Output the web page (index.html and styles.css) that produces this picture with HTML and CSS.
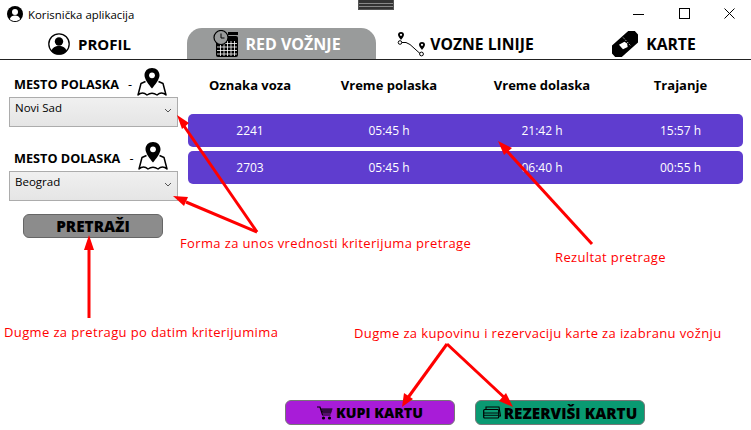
FILE: index.html
```html
<!DOCTYPE html>
<html>
<head>
    <meta charset="UTF-8">
    <title>Korisnička aplikacija</title>
    <link rel="stylesheet" href="styles.css">
</head>
<body>
<div class="window">

    <div class="notch"></div>

    <div class="titlebar">
        <div class="app-title">
            <svg class="app-icon" viewBox="0 0 16 16"><circle cx="8" cy="8" r="8" fill="#000"/><circle cx="8" cy="6" r="3" fill="#fff"/><path d="M2.8 13c.8-2.600 2.800-3.600 5.200-3.600s4.400 1 5.200 3.600c-1.400 1.400-3.200 2-5.200 2s-3.800-.6-5.200-2z" fill="#fff"/></svg>
            <span>Korisnička aplikacija</span>
        </div>
        <div class="window-buttons">
            <svg class="win-btn" viewBox="0 0 11 11"><path d="M0 6.500h11" stroke="#000" fill="none"/></svg>
            <svg class="win-btn" viewBox="0 0 11 11"><rect x=".5" y=".5" width="10" height="10" stroke="#000" fill="none"/></svg>
            <svg class="win-btn" viewBox="0 0 11 11"><path d="M.5.5l10 10M10.500.5l-10 10" stroke="#000" fill="none"/></svg>
        </div>
    </div>

    <div class="tabs">
        <div class="tab tab-profil">
            <svg class="tab-icon" viewBox="0 0 22 22"><circle cx="11" cy="11" r="10.200" fill="#fff" stroke="#000" stroke-width="1.300"/><circle cx="11" cy="8.500" r="4.200"/><path d="M3.500 18c.8-3.500 3.500-5 7.500-5s6.700 1.500 7.500 5c-2 2.300-4.600 3.400-7.500 3.400S5.500 20.300 3.500 18z"/></svg>
            <span>PROFIL</span>
        </div>
        <div class="tab tab-active">
            <svg class="tab-icon-big" viewBox="0 0 26 28"><rect x="3" y="6" width="22" height="21" rx="2"/><rect x="15" y="2" width="10" height="3"/><g stroke="#fff" stroke-width=".8"><path d="M4 13.500h20M4 17h20M4 20.500h20M4 24h20M7.500 11v15M11 11v15M14.500 11v15M18 11v15M21.500 11v15"/></g><circle cx="8" cy="7.500" r="7" fill="#999b9b" stroke="#000" stroke-width="1.200"/><path d="M8 3.500v4.500h3.500" stroke="#000" stroke-width="1" fill="none"/></svg>
            <span>RED VOŽNJE</span>
        </div>
        <div class="tab tab-linije">
            <svg class="route-icon" viewBox="0 0 32 26"><path d="M3 11.500h6l4 2 10 9" fill="none" stroke="#000"/><circle cx="3" cy="11.500" r="1.800" fill="#fff" stroke="#000"/><circle cx="24.500" cy="23" r="1.900" fill="#fff" stroke="#000"/><path d="M4 1c-2 0-3 1.300-3 2.800 0 1.700 2 4 3 5.200 1-1.200 3-3.500 3-5.200C7 2.300 6 1 4 1z"/><circle cx="4" cy="3.800" r="1.100" fill="#fff"/><path d="M25 11c-2 0-3 1.300-3 2.800 0 1.700 2 4 3 5.200 1-1.200 3-3.500 3-5.200 0-1.500-1-2.800-3-2.800z"/><circle cx="25" cy="13.800" r="1.100" fill="#fff"/></svg>
            <span>VOZNE LINIJE</span>
        </div>
        <div class="tab tab-karte">
            <svg class="ticket-icon" viewBox="0 0 26 26"><g transform="rotate(-42 13 13)"><rect x="-3" y="5.500" width="32" height="15" rx="3"/><path d="M8 9.500l6 1.500 1 3-2 3-5-1.500z" fill="#fff"/><path d="M16 7v12" stroke="#fff" stroke-width=".7" stroke-dasharray="1.500 1.500"/></g></svg>
            <span>KARTE</span>
        </div>
    </div>

    <div class="content">
        <div class="search-form">
            <div class="field">
                <div class="field-label">
                    <b>MESTO POLASKA</b><span class="dash">-</span>
                    <svg class="pin-icon" viewBox="0 0 30 30"><path d="M15 1c-4.500 0-7.500 3.200-7.500 7.200 0 4.200 4.700 9.800 7.500 13.300 2.800-3.500 7.500-9.100 7.500-13.300C22.500 4.200 19.500 1 15 1z"/><circle cx="15" cy="8.300" r="2.900" fill="#fff"/><path d="M8.500 14.500L4 16.500 1 28c3-2.600 6-2.600 9 0 3.300-2.200 6.700-2.200 10 0 3-2.600 6-2.600 9 0l-3-11.500-4.500-2" fill="none" stroke="#000" stroke-width="1.500" stroke-linejoin="round"/></svg>
                </div>
                <div class="combo">
                    <span>Novi Sad</span>
                    <svg class="chevron" viewBox="0 0 8 5"><path d="M1 1l3 3 3-3" fill="none" stroke="#555"/></svg>
                </div>
            </div>
            <div class="field field-second">
                <div class="field-label">
                    <b>MESTO DOLASKA</b><span class="dash">-</span>
                    <svg class="pin-icon" viewBox="0 0 30 30"><path d="M15 1c-4.500 0-7.500 3.200-7.500 7.200 0 4.200 4.700 9.800 7.500 13.300 2.800-3.500 7.500-9.100 7.500-13.300C22.500 4.200 19.500 1 15 1z"/><circle cx="15" cy="8.300" r="2.900" fill="#fff"/><path d="M8.500 14.500L4 16.500 1 28c3-2.600 6-2.600 9 0 3.300-2.200 6.700-2.200 10 0 3-2.600 6-2.600 9 0l-3-11.500-4.500-2" fill="none" stroke="#000" stroke-width="1.500" stroke-linejoin="round"/></svg>
                </div>
                <div class="combo">
                    <span>Beograd</span>
                    <svg class="chevron" viewBox="0 0 8 5"><path d="M1 1l3 3 3-3" fill="none" stroke="#555"/></svg>
                </div>
            </div>
            <div class="search-btn">PRETRAŽI</div>
        </div>

        <div class="results">
            <div class="row-head">
                <div>Oznaka voza</div>
                <div>Vreme polaska</div>
                <div>Vreme dolaska</div>
                <div>Trajanje</div>
            </div>
            <div class="row">
                <div>2241</div>
                <div>05:45 h</div>
                <div>21:42 h</div>
                <div>15:57 h</div>
            </div>
            <div class="row">
                <div>2703</div>
                <div>05:45 h</div>
                <div>06:40 h</div>
                <div>00:55 h</div>
            </div>
        </div>
    </div>

    <div class="actions">
        <div class="action-btn btn-kupi">
            <svg class="cart-icon" viewBox="0 0 16 14"><path d="M0 1h3l2.500 8h8" fill="none" stroke="#000" stroke-width="1.200"/><path d="M4 2.500h11.500l-1.500 5H5.500z"/><path d="M5 4h10M5.500 6h9" stroke="#a81cd8" stroke-width=".6"/><circle cx="6.500" cy="12" r="1.600"/><circle cx="12.500" cy="12" r="1.600"/></svg>
            <span>KUPI KARTU</span>
        </div>
        <div class="action-btn btn-rezervisi">
            <svg class="res-icon" viewBox="0 0 18 13"><path d="M3 3V1h13l1.500 9H16" fill="none" stroke="#000" stroke-width="1.100"/><rect x=".7" y="3.500" width="15" height="8.500" rx="1" fill="none" stroke="#000" stroke-width="1.200"/><path d="M1 7h14M1 9.300h14" stroke="#000" stroke-width=".9"/></svg>
            <span>REZERVIŠI KARTU</span>
        </div>
    </div>

    <!-- napomene preko slike -->
    <svg class="arrows" viewBox="0 0 751 430">
        <g stroke="#f00" stroke-width="3" fill="#f00">
            <path d="M257 232L184 126"/>
            <path d="M257 232L186 202"/>
            <path d="M89 318V248"/>
            <path d="M592 244L506 150"/>
            <path d="M447 344L407 399"/>
            <path d="M447 344L507 400"/>
        </g>
        <g fill="#f00">
            <path d="M177 115l12 8-7 6z"/>
            <path d="M173 196l15 1-4 9z"/>
            <path d="M89 235l5 15h-10z"/>
            <path d="M498 141l14 7-8 7z"/>
            <path d="M402 407l2-14 9 6z"/>
            <path d="M513 407l-14-6 7-8z"/>
        </g>
    </svg>
    <div class="note note-forma">Forma za unos vrednosti kriterijuma pretrage</div>
    <div class="note note-rezultat">Rezultat pretrage</div>
    <div class="note note-pretraga">Dugme za pretragu po datim kriterijumima</div>
    <div class="note note-kupovina">Dugme za kupovinu i rezervaciju karte za izabranu vožnju</div>

</div>
</body>
</html>
```

FILE: styles.css
```css
* {
    box-sizing: border-box;
}

body {
    margin: 0;
    background: #fff;
    font-family: "Open Sans", "Noto Sans", sans-serif;
    color: #000;
}

.window {
    position: relative;
    width: 751px;
    height: 430px;
    overflow: hidden;
}

.notch {
    position: absolute;
    left: 358px;
    top: 0;
    width: 36px;
    height: 10px;
    background: linear-gradient(#333 3px, #888 3px, #888 4px, #333 4px, #333 6px, #888 6px, #888 7px, #333 7px);
    border: 1px solid #555;
    border-top: 0;
}

.titlebar {
    height: 28px;
    display: flex;
    justify-content: space-between;
    padding: 5px 0 0 7px;
}

.app-title {
    display: flex;
    align-items: center;
    gap: 5px;
    height: 18px;
    font-size: 11.400px;
}

.app-icon {
    width: 16px;
    height: 16px;
}

.window-buttons {
    display: flex;
    gap: 34.500px;
    padding: 3px 16px 0 0;
}

.win-btn {
    width: 11px;
    height: 11px;
}

.tabs {
    height: 32px;
    display: grid;
    grid-template-columns: 187px 189px 179px 1fr;
    border-bottom: 1px solid #222;
}

.tab {
    display: flex;
    align-items: center;
    justify-content: center;
    font-size: 15.700px;
    font-weight: 700;
}

.tab-profil {
    gap: 8px;
    padding-right: 8px;
    font-size: 15px;
}

.tab-active {
    gap: 6px;
    background: #999b9b;
    color: #fff;
    border-radius: 15px 15px 0 0;
    font-size: 16px;
    padding-right: 9px;
}

.tab-linije {
    gap: 1px;
}

.tab-karte {
    gap: 8px;
    padding-left: 2px;
}

.tab-icon {
    width: 22px;
    height: 22px;
}

.tab-icon-big {
    width: 26px;
    height: 28px;
}

.route-icon {
    width: 32px;
    height: 26px;
}

.ticket-icon {
    width: 26px;
    height: 26px;
}

.content {
    display: flex;
}

.search-form {
    width: 188px;
    padding: 7px 0 0 9px;
}

.field-second {
    margin-top: 14px;
}

.field-label {
    height: 30px;
    display: flex;
    align-items: flex-end;
    padding: 0 0 4px 5px;
    font-size: 12.700px;
}

.field-label b {
    line-height: 17px;
}

.dash {
    margin-left: 9px;
    line-height: 17px;
}

.pin-icon {
    width: 30px;
    height: 30px;
    margin: 0 0 -4px 5px;
}

.combo {
    width: 169px;
    height: 30px;
    display: flex;
    justify-content: space-between;
    padding: 2px 5px 0 5px;
    background: linear-gradient(#f0f0f0, #e5e5e5);
    border: 1px solid #acacac;
    font-size: 11.500px;
}

.chevron {
    width: 8px;
    height: 5px;
    margin-top: 8px;
}

.search-btn {
    width: 140px;
    height: 24px;
    margin: 13px 0 0 14px;
    background: #8c8c8c;
    border: 1px solid #666;
    border-radius: 6px;
    font-size: 15.300px;
    font-weight: 800;
    line-height: 22px;
    text-align: center;
}

.results {
    width: 555px;
}

.row-head,
.row {
    display: grid;
    grid-template-columns: 124px 154px 152px 125px;
    text-align: center;
}

.row-head {
    height: 54px;
    padding-top: 16px;
    font-size: 13px;
    font-weight: 700;
}

.row {
    height: 33px;
    margin-bottom: 4px;
    background: #5f3dcf;
    border-radius: 5px;
    color: #fff;
    font-size: 12px;
    line-height: 33px;
}

.actions {
    position: absolute;
    left: 285px;
    top: 400px;
    display: flex;
    gap: 20px;
}

.action-btn {
    width: 170px;
    height: 25px;
    display: flex;
    align-items: center;
    justify-content: center;
    gap: 3px;
    border: 1px solid #777;
    border-radius: 6px;
    font-weight: 800;
}

.btn-kupi {
    background: #a81cd8;
    font-size: 14.200px;
}

.btn-rezervisi {
    background: #0a9a72;
    font-size: 15.300px;
}

.cart-icon {
    width: 16px;
    height: 14px;
}

.res-icon {
    width: 18px;
    height: 13px;
}

.arrows {
    position: absolute;
    left: 0;
    top: 0;
    width: 751px;
    height: 430px;
}

.note {
    position: absolute;
    color: #f00;
    font-size: 13px;
    letter-spacing: .37px;
    line-height: 18px;
    white-space: nowrap;
}

.note-forma {
    left: 180px;
    top: 234px;
}

.note-rezultat {
    left: 555px;
    top: 248px;
}

.note-pretraga {
    left: 4px;
    top: 323px;
}

.note-kupovina {
    left: 354px;
    top: 324px;
}
```
